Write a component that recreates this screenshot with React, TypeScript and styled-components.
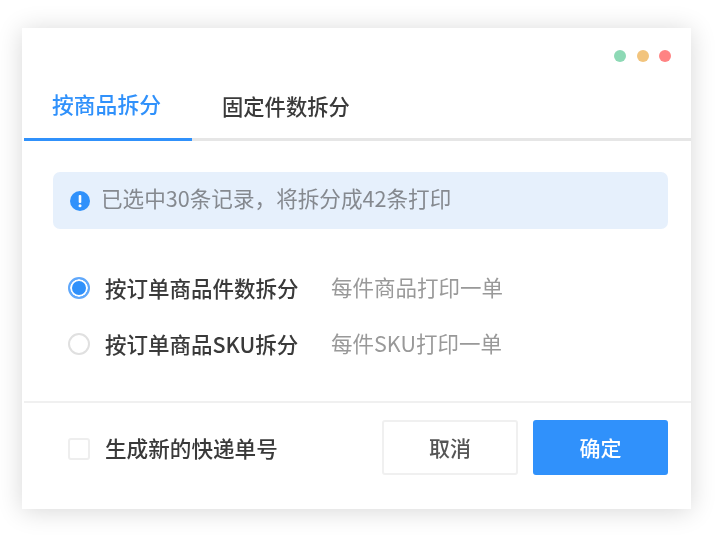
import styled, { createGlobalStyle } from 'styled-components';

const GlobalStyle = createGlobalStyle`
  html, body {
    margin: 0;
    padding: 0;
    background: #fff;
  }
  * {
    box-sizing: border-box;
  }
`;

const Page = styled.div`
  width: 723px;
  height: 535px;
  padding: 28px 32px 26px 22px;
  overflow: hidden;
  font-family: 'Noto Sans CJK SC', 'Noto Sans', sans-serif;
  filter: blur(0.4px);
`;

const Card = styled.div`
  height: 481px;
  padding-left: 2px;
  background: #fff;
  box-shadow: 0 2px 24px rgba(0, 0, 0, 0.16);
  display: flex;
  flex-direction: column;
`;

const WindowDots = styled.div`
  height: 22px;
  margin-top: 17px;
  padding-right: 20px;
  display: flex;
  justify-content: flex-end;
  align-items: center;
  gap: 10.5px;
`;

const Dot = styled.span<{ color: string }>`
  width: 12px;
  height: 12px;
  border-radius: 50%;
  background: ${(props) => props.color};
`;

const Tabs = styled.div`
  height: 52px;
  margin-top: 22px;
  display: flex;
  border-bottom: 3px solid #e6e6e6;
`;

const Tab = styled.div<{ active?: boolean }>`
  height: 52px;
  width: ${(props) => (props.active ? '168px' : 'auto')};
  padding-left: ${(props) => (props.active ? '28px' : '30px')};
  font-size: ${(props) => (props.active ? '21.8px' : '21.3px')};
  line-height: ${(props) => (props.active ? '30px' : '34px')};
  font-weight: 500;
  color: ${(props) => (props.active ? '#3091fb' : '#3a3a3a')};
  border-bottom: 3px solid ${(props) => (props.active ? '#3091fb' : 'transparent')};
`;

const Content = styled.div`
  flex: 1;
  padding: 31px 23px 0 29px;
`;

const Notice = styled.div`
  height: 57px;
  padding-left: 17px;
  display: flex;
  align-items: center;
  gap: 11px;
  background: #e6f0fc;
  border-radius: 7px;
`;

const NoticeText = styled.span`
  margin-bottom: 6px;
  font-size: 21.6px;
  color: #85898f;
`;

const Options = styled.div`
  margin-top: 43px;
  padding-left: 15px;
  display: flex;
  flex-direction: column;
  gap: 24px;
`;

const Option = styled.div`
  height: 32px;
  display: flex;
  align-items: center;
`;

const Radio = styled.span<{ checked?: boolean }>`
  width: 22px;
  height: 22px;
  margin-right: 15px;
  border-radius: 50%;
  border: ${(props) => (props.checked ? '2px solid #60a8fb' : '2px solid #e0e0e0')};
  background: ${(props) => (props.checked ? '#3091fb' : '#fff')};
  box-shadow: ${(props) => (props.checked ? 'inset 0 0 0 2px #fff' : 'none')};
`;

const OptionLabel = styled.span`
  width: 226px;
  margin-bottom: 2px;
  font-size: 21.5px;
  font-weight: 500;
  color: #3a3a3a;
  white-space: nowrap;
`;

const OptionHint = styled.span`
  margin-bottom: 4px;
  font-size: 21.5px;
  color: #999;
  white-space: nowrap;
`;

const Footer = styled.div`
  height: 108px;
  padding: 17px 23px 0 44px;
  display: flex;
  align-items: flex-start;
  border-top: 2px solid #f0f0f0;
`;

const CheckRow = styled.div`
  height: 58px;
  display: flex;
  align-items: center;
  flex: 1;
`;

const CheckBox = styled.span`
  width: 22px;
  height: 22px;
  margin-right: 15px;
  border: 2px solid #eee;
  border-radius: 3px;
  background: #fff;
`;

const CheckLabel = styled.span`
  margin-bottom: 3px;
  font-size: 21.6px;
  font-weight: 500;
  color: #3a3a3a;
`;

const Button = styled.button<{ primary?: boolean }>`
  width: ${(props) => (props.primary ? '135px' : '136px')};
  height: 55px;
  margin-left: ${(props) => (props.primary ? '15px' : '0')};
  padding: 0 0 2px;
  border: 2px solid ${(props) => (props.primary ? '#3091fb' : '#f0f0f0')};
  border-radius: 3px;
  background: ${(props) => (props.primary ? '#3091fb' : '#fff')};
  color: ${(props) => (props.primary ? '#fff' : '#555')};
  font-family: inherit;
  font-size: 21px;
  font-weight: 500;
`;

function InfoIcon() {
  return (
    <svg width="20" height="20" viewBox="0 0 20 20">
      <circle cx="10" cy="10" r="10" fill="#3091fb" />
      <rect x="8.7" y="4" width="2.6" height="8" rx="1" fill="#fff" />
      <circle cx="10" cy="14.8" r="1.5" fill="#fff" />
    </svg>
  );
}

function App() {
  return (
    <>
      <GlobalStyle />
      <Page>
        <Card>
          <WindowDots>
            <Dot color="#8dd9b5" />
            <Dot color="#f2c47d" />
            <Dot color="#ff8383" />
          </WindowDots>
          <Tabs>
            <Tab active>按商品拆分</Tab>
            <Tab>固定件数拆分</Tab>
          </Tabs>
          <Content>
            <Notice>
              <InfoIcon />
              <NoticeText>已选中30条记录，将拆分成42条打印</NoticeText>
            </Notice>
            <Options>
              <Option>
                <Radio checked />
                <OptionLabel>按订单商品件数拆分</OptionLabel>
                <OptionHint>每件商品打印一单</OptionHint>
              </Option>
              <Option>
                <Radio />
                <OptionLabel>按订单商品SKU拆分</OptionLabel>
                <OptionHint>每件SKU打印一单</OptionHint>
              </Option>
            </Options>
          </Content>
          <Footer>
            <CheckRow>
              <CheckBox />
              <CheckLabel>生成新的快递单号</CheckLabel>
            </CheckRow>
            <Button>取消</Button>
            <Button primary>确定</Button>
          </Footer>
        </Card>
      </Page>
    </>
  );
}

export default App;
